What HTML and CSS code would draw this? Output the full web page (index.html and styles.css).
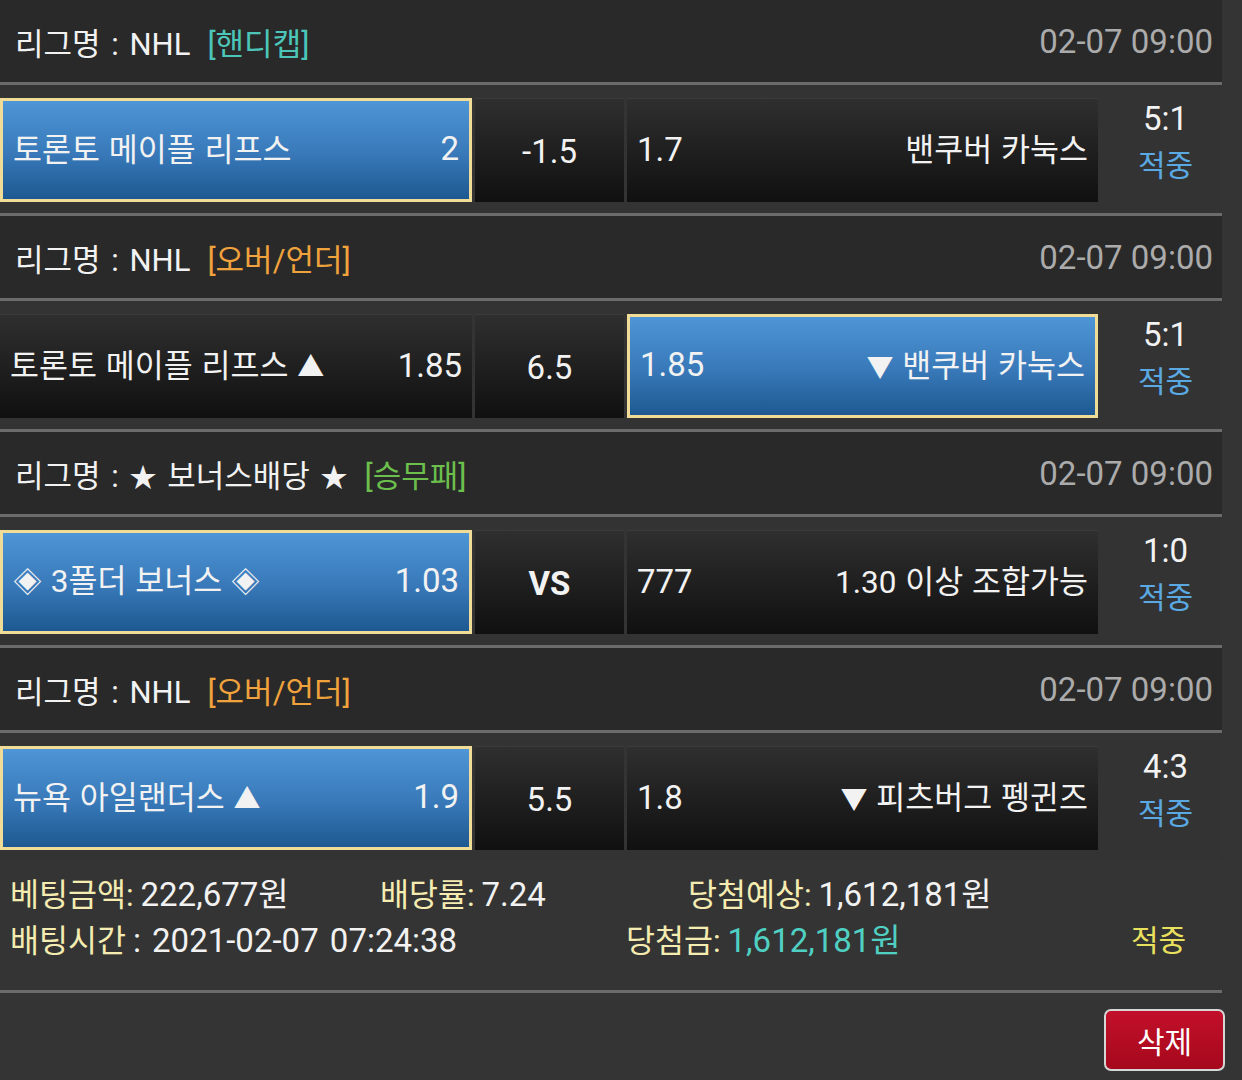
FILE: index.html
```html
<!DOCTYPE html>
<html lang="ko">
<head>
    <meta charset="UTF-8">
    <meta name="viewport" content="width=device-width, initial-scale=1.0">
    <title>배팅내역</title>
    <link rel="stylesheet" href="styles.css">
</head>
<body>
    <div class="wrap">
        <!-- 1 -->
        <div class="league">
            <span class="league-name">리그명 : NHL</span>
            <span class="tag tag-handi">[핸디캡]</span>
            <span class="time">02-07 09:00</span>
        </div>
        <div class="match">
            <div class="pick pick-on"><span class="team">토론토 메이플 리프스</span><span class="odd">2</span></div>
            <div class="pick pick-mid">-1.5</div>
            <div class="pick"><span class="odd">1.7</span><span class="team">밴쿠버 카눅스</span></div>
            <div class="result"><div class="score">5:1</div><div class="hit">적중</div></div>
        </div>

        <!-- 2 -->
        <div class="league">
            <span class="league-name">리그명 : NHL</span>
            <span class="tag tag-ou">[오버/언더]</span>
            <span class="time">02-07 09:00</span>
        </div>
        <div class="match">
            <div class="pick"><span class="team">토론토 메이플 리프스 <span class="sym">▲</span></span><span class="odd">1.85</span></div>
            <div class="pick pick-mid">6.5</div>
            <div class="pick pick-on"><span class="odd">1.85</span><span class="team"><span class="sym">▼</span> 밴쿠버 카눅스</span></div>
            <div class="result"><div class="score">5:1</div><div class="hit">적중</div></div>
        </div>

        <!-- 3 -->
        <div class="league">
            <span class="league-name">리그명 : <span class="star">★</span> 보너스배당 <span class="star">★</span></span>
            <span class="tag tag-wdl">[승무패]</span>
            <span class="time">02-07 09:00</span>
        </div>
        <div class="match">
            <div class="pick pick-on"><span class="team"><span class="sym sym-dia">◈</span> 3폴더 보너스 <span class="sym sym-dia">◈</span></span><span class="odd">1.03</span></div>
            <div class="pick pick-mid pick-vs">VS</div>
            <div class="pick"><span class="odd">777</span><span class="team">1.30 이상 조합가능</span></div>
            <div class="result"><div class="score">1:0</div><div class="hit">적중</div></div>
        </div>

        <!-- 4 -->
        <div class="league">
            <span class="league-name">리그명 : NHL</span>
            <span class="tag tag-ou">[오버/언더]</span>
            <span class="time">02-07 09:00</span>
        </div>
        <div class="match match-last">
            <div class="pick pick-on"><span class="team">뉴욕 아일랜더스 <span class="sym">▲</span></span><span class="odd">1.9</span></div>
            <div class="pick pick-mid">5.5</div>
            <div class="pick"><span class="odd">1.8</span><span class="team"><span class="sym">▼</span> 피츠버그 펭귄즈</span></div>
            <div class="result"><div class="score">4:3</div><div class="hit">적중</div></div>
        </div>

        <div class="summary">
            <div class="sum-row">
                <div class="sum-amount"><span class="label">베팅금액:</span> <span class="val">222,677원</span></div>
                <div class="sum-rate"><span class="label">배당률:</span> <span class="val">7.24</span></div>
                <div><span class="label">당첨예상:</span> <span class="val">1,612,181원</span></div>
            </div>
            <div class="sum-row">
                <div class="sum-time"><span class="label">배팅시간</span> <span class="val">: 2021-02-07 07:24:38</span></div>
                <div class="sum-win"><span class="label">당첨금:</span> <span class="val val-win">1,612,181원</span></div>
                <div class="sum-hit">적중</div>
            </div>
        </div>
    </div>

    <div class="actions">
        <button type="button" class="btn-del">삭제</button>
    </div>
</body>
</html>
```

FILE: styles.css
```css
body {
    margin: 0;
    background: #343434;
    font-family: Roboto, "Noto Sans CJK KR", sans-serif;
    color: #f2f2f2;
    word-spacing: 3px;
}
.wrap {
    width: 1222px;
}
.league {
    display: flex;
    align-items: center;
    height: 82px;
    padding: 0 9px 0 15px;
    background: #292929;
    border-bottom: 3px solid #6b6b6b;
    font-size: 31px;
    word-spacing: 3px;
}
.star {
    font-size: 27px;
}
.tag {
    margin-left: 17px;
}
.tag-handi {
    color: #4cc6b9;
}
.tag-ou {
    color: #f0a23c;
}
.tag-wdl {
    color: #6cbf4c;
}
.time {
    margin-left: auto;
    font-size: 33px;
    color: #ababab;
    word-spacing: 0;
}
.match {
    display: grid;
    grid-template-columns: 472px 149px 471px 1fr;
    column-gap: 3px;
    height: 104px;
    padding: 13px 0 11px;
    background: #333;
    border-bottom: 3px solid #6b6b6b;
}
.match-last {
    border-bottom: none;
}
.pick {
    display: flex;
    align-items: center;
    justify-content: space-between;
    padding: 0 10px;
    background: linear-gradient(#2f2f2f, #101010);
    border-top: 1px solid #3a3a3a;
}
.pick-on {
    border: 3px solid #f0dc96;
    background: linear-gradient(#4e96d7, #3878b8 55%, #1d5991);
}
.team {
    font-size: 31.5px;
    word-spacing: 1px;
    padding-bottom: 7px;
}
.sym {
    font-size: 27px;
}
.sym-dia {
    font-size: 29px;
}
.odd {
    font-size: 33px;
    padding-bottom: 3px;
}
.pick-mid {
    justify-content: center;
    font-size: 33px;
    padding-top: 2px;
}
.pick-vs {
    font-weight: bold;
}
.result {
    padding-left: 8px;
    text-align: center;
}
.score {
    font-size: 33px;
    line-height: 42px;
}
.hit {
    font-size: 30px;
    line-height: 52px;
    color: #5aa9e2;
}
.summary {
    padding: 8px 0 29px 10px;
    border-bottom: 3px solid #6b6b6b;
}
.sum-row {
    display: flex;
    align-items: center;
    height: 46px;
}
.label {
    font-size: 31.5px;
    color: #f4ecb0;
}
.val {
    font-size: 33px;
}
.val-win {
    color: #4fd0c3;
}
.sum-amount {
    width: 370px;
}
.sum-rate {
    width: 308px;
}
.sum-time {
    width: 616px;
}
.sum-win {
    width: 505px;
}
.sum-hit {
    font-size: 30px;
    color: #e9e05e;
}
.actions {
    display: flex;
    justify-content: flex-end;
    padding: 16px 17px 0 0;
}
.btn-del {
    width: 121px;
    height: 62px;
    background: linear-gradient(#c2102a, #a5081c);
    border: 2px solid #d6d6d6;
    border-radius: 7px;
    color: #fff;
    font-family: Roboto, "Noto Sans CJK KR", sans-serif;
    font-size: 30px;
}
```
